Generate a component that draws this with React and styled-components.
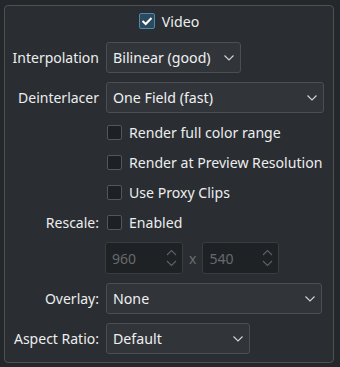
import React from 'react';
import styled, { createGlobalStyle } from 'styled-components';

const Global = createGlobalStyle`
  html, body {
    margin: 0;
    padding: 0;
    background: #25282b;
  }
  body {
    font-family: "Noto Sans", "Open Sans", sans-serif;
    font-size: 14px;
    color: #eceeef;
  }
`

const Page = styled.div`
  width: 340px;
  height: 367px;
  padding: 5px 0 0 4px;
  box-sizing: border-box;
`

const Group = styled.div`
  width: 330px;
  height: 358px;
  box-sizing: border-box;
  border: 1px solid #4e5154;
  border-radius: 4px;
  background: #2a2d31;
  padding: 7px 9px 0 0;
`

const Header = styled.label`
  display: flex;
  justify-content: center;
  align-items: center;
  gap: 7px;
  height: 16px;
  font-size: 14.2px;
  margin-left: 9px;
`

const Form = styled.div`
  display: grid;
  grid-template-columns: 94px 1fr;
  column-gap: 7px;
  row-gap: 9px;
  margin-top: 13px;
`

const Label = styled.div`
  display: flex;
  align-items: center;
  justify-content: flex-end;
  white-space: nowrap;
  font-size: 14px;
`

const Field = styled.div`
  display: flex;
  align-items: center;
  gap: 7px;
  height: ${({ h }) => h || 31}px;
  margin-left: ${({ ml }) => ml || 0}px;
  min-width: 0;
`

const Combo = styled.div`
  display: flex;
  align-items: center;
  justify-content: space-between;
  box-sizing: border-box;
  width: ${({ w }) => w}px;
  height: 31px;
  padding: 0 6px 0 6px;
  background: #31353a;
  border: 1px solid #4b4f53;
  border-radius: 3px;
  font-size: 14.2px;
  color: #eff0f1;
`

const Box = styled.span`
  display: inline-flex;
  align-items: center;
  justify-content: center;
  box-sizing: border-box;
  width: ${({ checked }) => (checked ? 16 : 15)}px;
  height: ${({ checked }) => (checked ? 16 : 15)}px;
  border-radius: 2px;
  flex: none;
  background: ${({ checked }) => (checked ? '#2b4a5d' : '#1e2023')};
  border: 1px solid ${({ checked }) => (checked ? '#4b89ad' : '#53575b')};
`

const Check = styled.div`
  display: flex;
  align-items: center;
  gap: 7px;
  margin-left: 1px;
  font-size: 14.1px;
`

const Spin = styled.div`
  display: flex;
  align-items: center;
  justify-content: space-between;
  box-sizing: border-box;
  width: ${({ w }) => w}px;
  height: 32px;
  padding: 0 5px 0 6px;
  background: #1f2225;
  border: 1px solid #393c40;
  border-radius: 3px;
  color: #676a6d;
  font-size: 14px;
`

const Times = styled.span`
  color: #6a6d70;
  font-size: 14px;
  margin: 0 -1px;
`

const Chevron = () => (
  <svg width="10" height="6" viewBox="0 0 10 6">
    <path d="M0.5 0.5 L5 5 L9.5 0.5" fill="none" stroke="#d4d5d6" strokeWidth="1.1" />
  </svg>
)

const SpinArrows = () => (
  <svg width="11" height="22" viewBox="0 0 11 22">
    <path d="M1 8 L5.5 3.5 L10 8" fill="none" stroke="#5f6265" strokeWidth="1.1" />
    <path d="M1 14 L5.5 18.5 L10 14" fill="none" stroke="#5f6265" strokeWidth="1.1" />
  </svg>
)

const Tick = () => (
  <svg width="12" height="10" viewBox="0 0 12 10">
    <path d="M1.5 5 L4.7 8 L10.5 2" fill="none" stroke="#ffffff" strokeWidth="2" />
  </svg>
)

const CheckBox = ({ checked, children }) => (
  <Check>
    <Box checked={checked}>{checked && <Tick />}</Box>
    {children}
  </Check>
)

export default function App() {
  return (
    <Page>
      <Global />
      <Group>
        <Header>
          <Box checked><Tick /></Box>
          Video
        </Header>
        <Form>
          <Label>Interpolation</Label>
          <Field>
            <Combo w={135}>Bilinear (good)<Chevron /></Combo>
          </Field>

          <Label>Deinterlacer</Label>
          <Field>
            <Combo w={218}>One Field (fast)<Chevron /></Combo>
          </Field>

          <Label />
          <Field h={21}><CheckBox>Render full color range</CheckBox></Field>

          <Label />
          <Field h={21}><CheckBox>Render at Preview Resolution</CheckBox></Field>

          <Label />
          <Field h={21}><CheckBox>Use Proxy Clips</CheckBox></Field>

          <Label>Rescale:</Label>
          <Field h={21}><CheckBox>Enabled</CheckBox></Field>

          <Label />
          <Field h={32} ml={-1}>
            <Spin w={78}>960<SpinArrows /></Spin>
            <Times>x</Times>
            <Spin w={77}>540<SpinArrows /></Spin>
          </Field>

          <Label>Overlay:</Label>
          <Field>
            <Combo w={216}>None<Chevron /></Combo>
          </Field>

          <Label>Aspect Ratio:</Label>
          <Field>
            <Combo w={144}>Default<Chevron /></Combo>
          </Field>
        </Form>
      </Group>
    </Page>
  );
}
